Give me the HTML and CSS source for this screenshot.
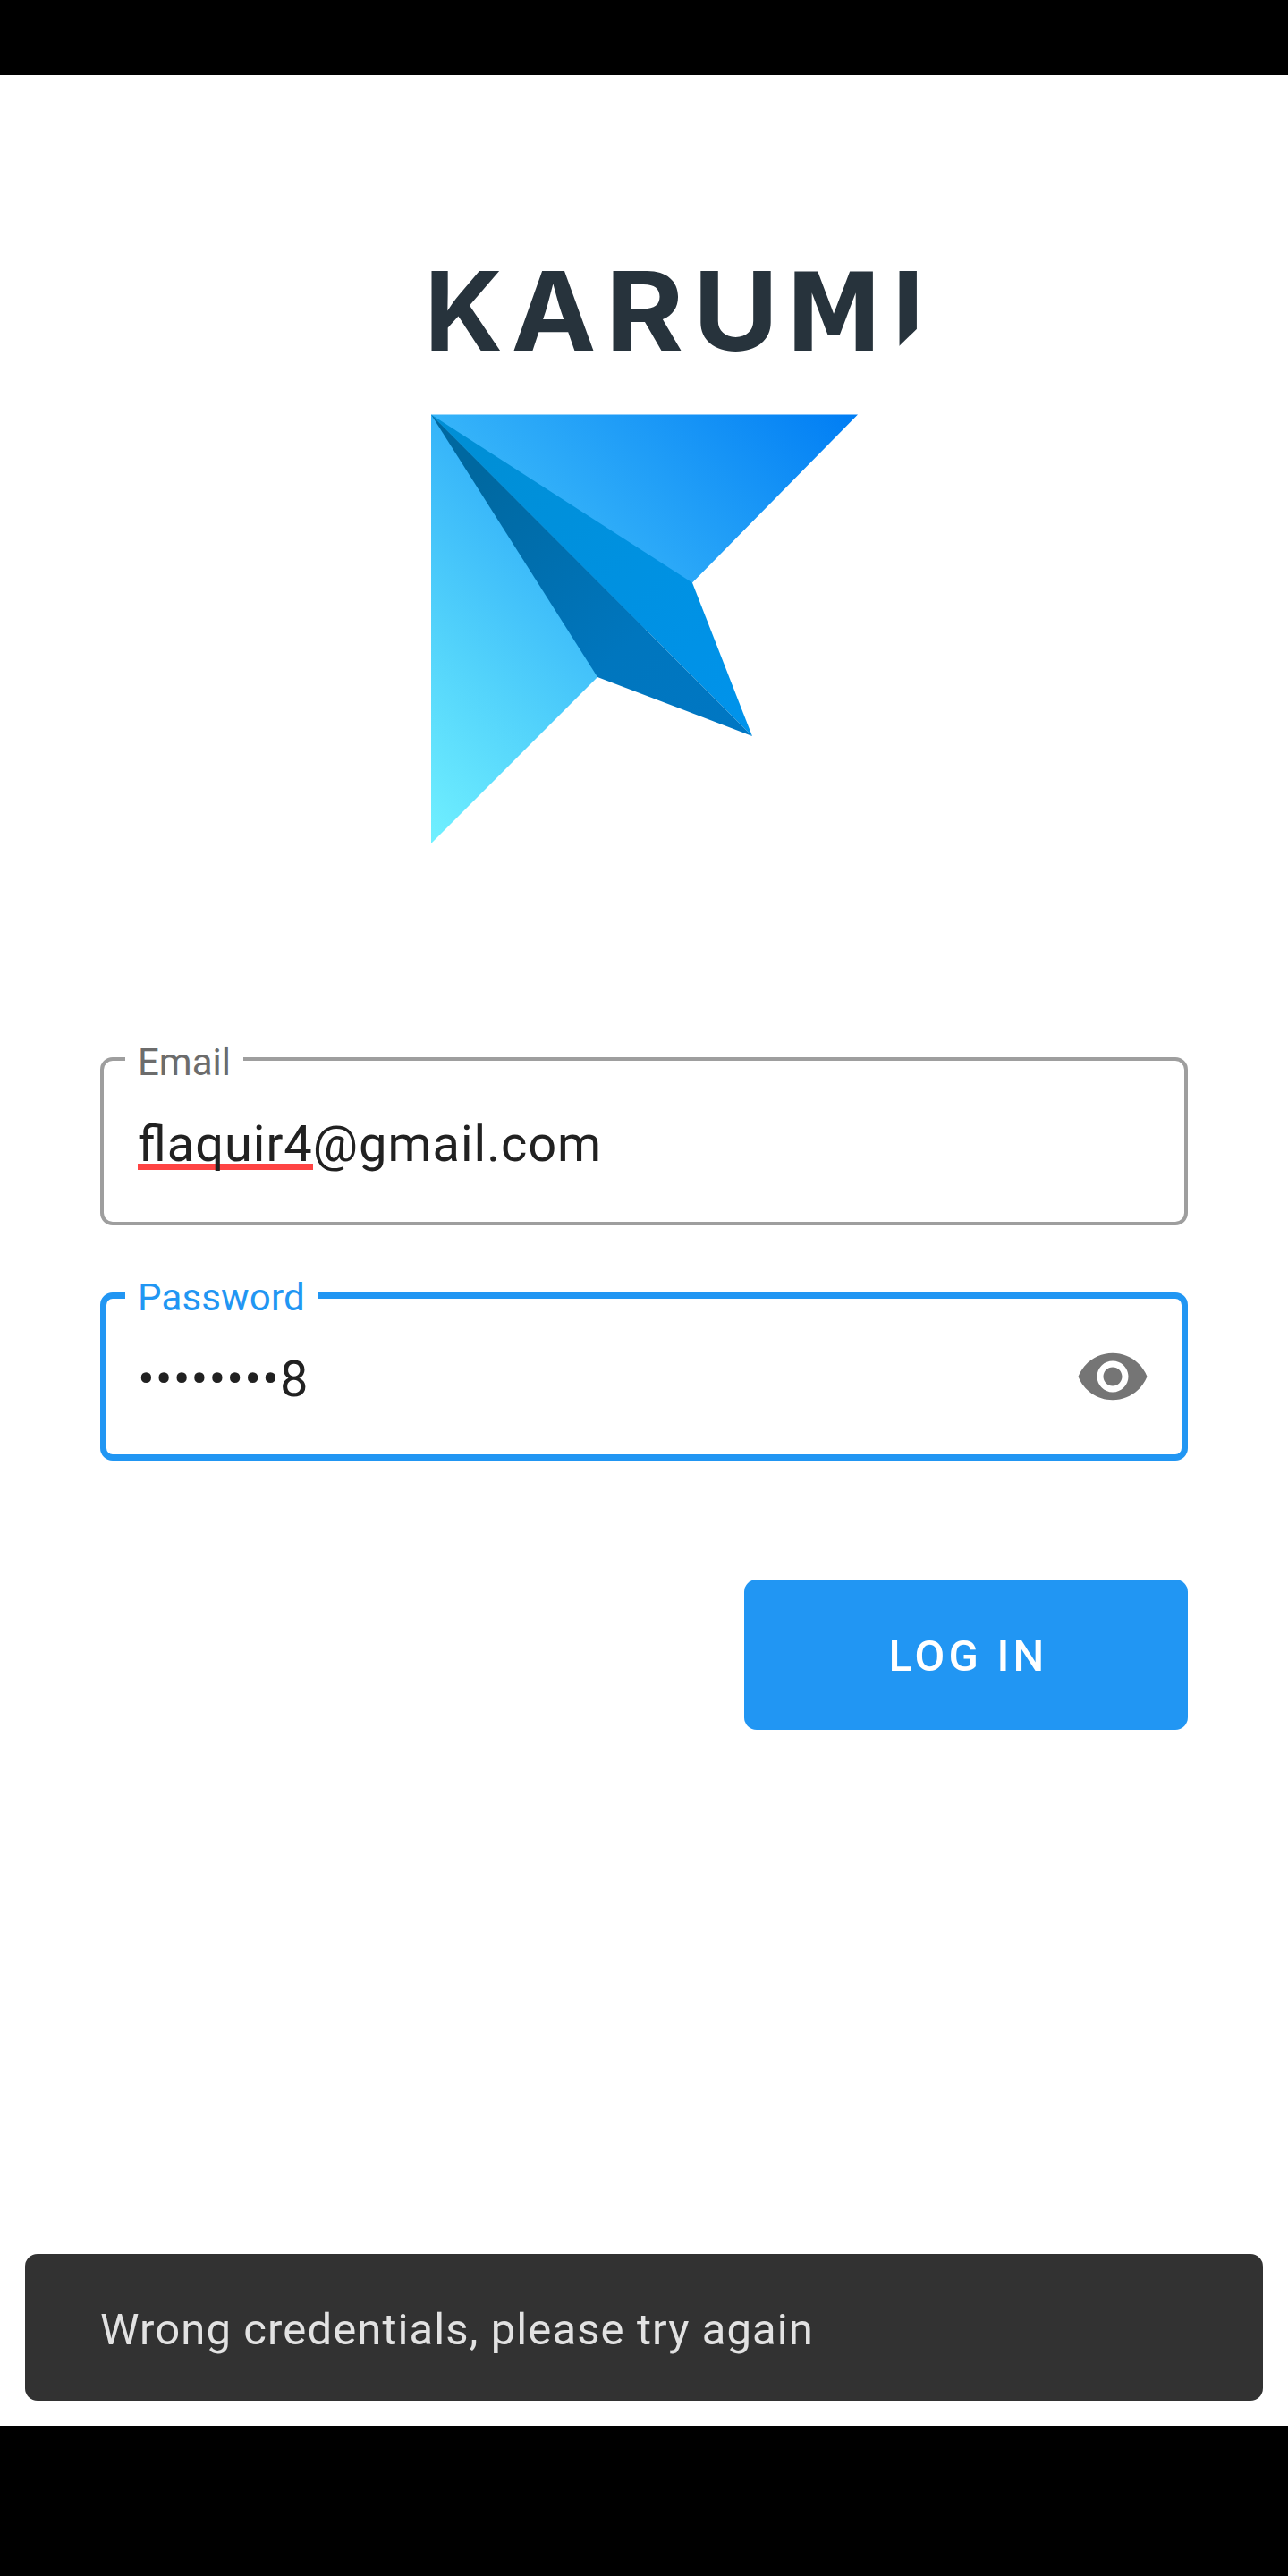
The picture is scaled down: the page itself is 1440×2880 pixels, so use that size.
FILE: index.html
```html
<!DOCTYPE html>
<html lang="en">
<head>
<meta charset="utf-8">
<title>Log in</title>
<link rel="stylesheet" href="styles.css">
</head>
<body>
<div class="screen">
  <div class="status-bar"></div>
  <main class="content">
    <svg class="logo" viewBox="0 0 560 660" role="img" aria-label="Karumi">
      <defs>
        <linearGradient id="wing" gradientUnits="userSpaceOnUse" x1="2" y1="643" x2="479" y2="163">
          <stop offset="0" stop-color="#70f0ff"/>
          <stop offset=".25" stop-color="#53d3fb"/>
          <stop offset=".5" stop-color="#36b4f9"/>
          <stop offset="1" stop-color="#007df4"/>
        </linearGradient>
        <linearGradient id="fold" gradientUnits="userSpaceOnUse" x1="60" y1="220" x2="361" y2="523">
          <stop offset="0" stop-color="#0068a0"/>
          <stop offset=".6" stop-color="#0076be"/>
          <stop offset="1" stop-color="#0077c4"/>
        </linearGradient>
        <linearGradient id="keel" gradientUnits="userSpaceOnUse" x1="60" y1="200" x2="361" y2="523">
          <stop offset="0" stop-color="#008fd6"/>
          <stop offset="1" stop-color="#0093ec"/>
        </linearGradient>
      </defs>
      <text class="wordmark" y="91.5"><tspan x="-5.6" textLength="87.6" lengthAdjust="spacingAndGlyphs">K</tspan><tspan x="91.5" textLength="95" lengthAdjust="spacingAndGlyphs">A</tspan><tspan x="196.7" textLength="87.5" lengthAdjust="spacingAndGlyphs">R</tspan><tspan x="294.8" textLength="95.5" lengthAdjust="spacingAndGlyphs">U</tspan><tspan class="wide-m" x="398.6" textLength="107.3" lengthAdjust="spacingAndGlyphs">M</tspan><tspan x="516.9" textLength="36.5" lengthAdjust="spacingAndGlyphs">I</tspan></text>
      <path fill="#fff" d="M520 92L550 63V96H520Z"/>
      <path fill="url(#wing)" d="M2 163.500H479L294 351.500L188 457L2 643Z"/>
      <path fill="url(#keel)" d="M2 163.500L294 351.500L361 523Z"/>
      <path fill="url(#fold)" d="M2 163.500L361 523L188 457Z"/>
    </svg>
    <form class="form">
      <div class="field">
        <label class="field-label">Email</label>
        <div class="field-text"><span class="misspelled">flaquir4</span>@gmail.com</div>
      </div>
      <div class="field field-focused">
        <label class="field-label">Password</label>
        <div class="field-text">••••••••8</div>
        <svg class="eye" viewBox="0 0 24 24"><path d="M12 4.500C7 4.500 2.730 7.610 1 12c1.730 4.390 6 7.500 11 7.500s9.270-3.110 11-7.500c-1.730-4.390-6-7.500-11-7.500zM12 17c-2.760 0-5-2.240-5-5s2.240-5 5-5 5 2.240 5 5-2.240 5-5 5zm0-8c-1.660 0-3 1.340-3 3s1.340 3 3 3 3-1.340 3-3-1.340-3-3-3z"/></svg>
      </div>
      <button class="submit" type="button">LOG IN</button>
    </form>
    <div class="snackbar">Wrong credentials, please try again</div>
  </main>
  <div class="nav-bar"></div>
</div>
</body>
</html>
```
FILE: styles.css
```css
* { box-sizing: border-box; }
body { margin: 0; background: #fff; font-family: Roboto, "Liberation Sans", sans-serif; }
.screen { width: 1440px; height: 2880px; display: flex; flex-direction: column; }
.status-bar { height: 84px; background: #000; }
.nav-bar { height: 168px; background: #000; }
.content { flex: 1; display: flex; flex-direction: column; padding: 216px 28px 28px; }
.logo { width: 560px; height: 660px; margin-left: 452px; fill: #27333c; }
.wordmark { font-family: Inter, sans-serif; font-weight: 700; font-size: 122.2px; }
.wide-m { font-family: "DejaVu Sans", sans-serif; font-stretch: condensed; font-size: 122px; }
.form { display: flex; flex-direction: column; margin: 222px 84px 0; }
.field {
  position: relative;
  display: flex;
  align-items: center;
  justify-content: space-between;
  height: 188px;
  padding: 0 38px;
  border: 4px solid #9e9e9e;
  border-radius: 14px;
}
.field-label {
  position: absolute;
  left: 24px;
  top: -22px;
  padding: 0 14px;
  background: #fff;
  color: #6c6c6c;
  font-size: 42px;
  line-height: 48px;
}
.field-text {
  padding-top: 6px;
  color: #212121;
  font-size: 56px;
  line-height: 66px;
  letter-spacing: .97px;
  font-feature-settings: "liga" 1;
}
.misspelled {
  background: linear-gradient(#ff4444, #ff4444) 0 55px / 100% 7px no-repeat;
}
.field-focused { margin-top: 75px; padding: 0 35px; border: 7px solid #2196f3; }
.field-focused .field-label { left: 21px; top: -25px; color: #2196f3; letter-spacing: .15px; }
.eye { width: 84px; height: 84px; fill: #757575; }
.submit {
  align-self: flex-end;
  width: 496px;
  height: 168px;
  margin-top: 133px;
  padding: 4px 0 0 5px;
  border: 0;
  border-radius: 14px;
  background: #2196f3;
  color: #fff;
  font: 500 49px/58px Roboto, "Liberation Sans", sans-serif;
  letter-spacing: 4.2px;
}
.snackbar {
  display: flex;
  align-items: center;
  height: 164px;
  margin-top: auto;
  padding: 4px 84px 0;
  border-radius: 14px;
  background: #323232;
  color: #e2e2e2;
  font-size: 49px;
  letter-spacing: 1.1px;
}
```
